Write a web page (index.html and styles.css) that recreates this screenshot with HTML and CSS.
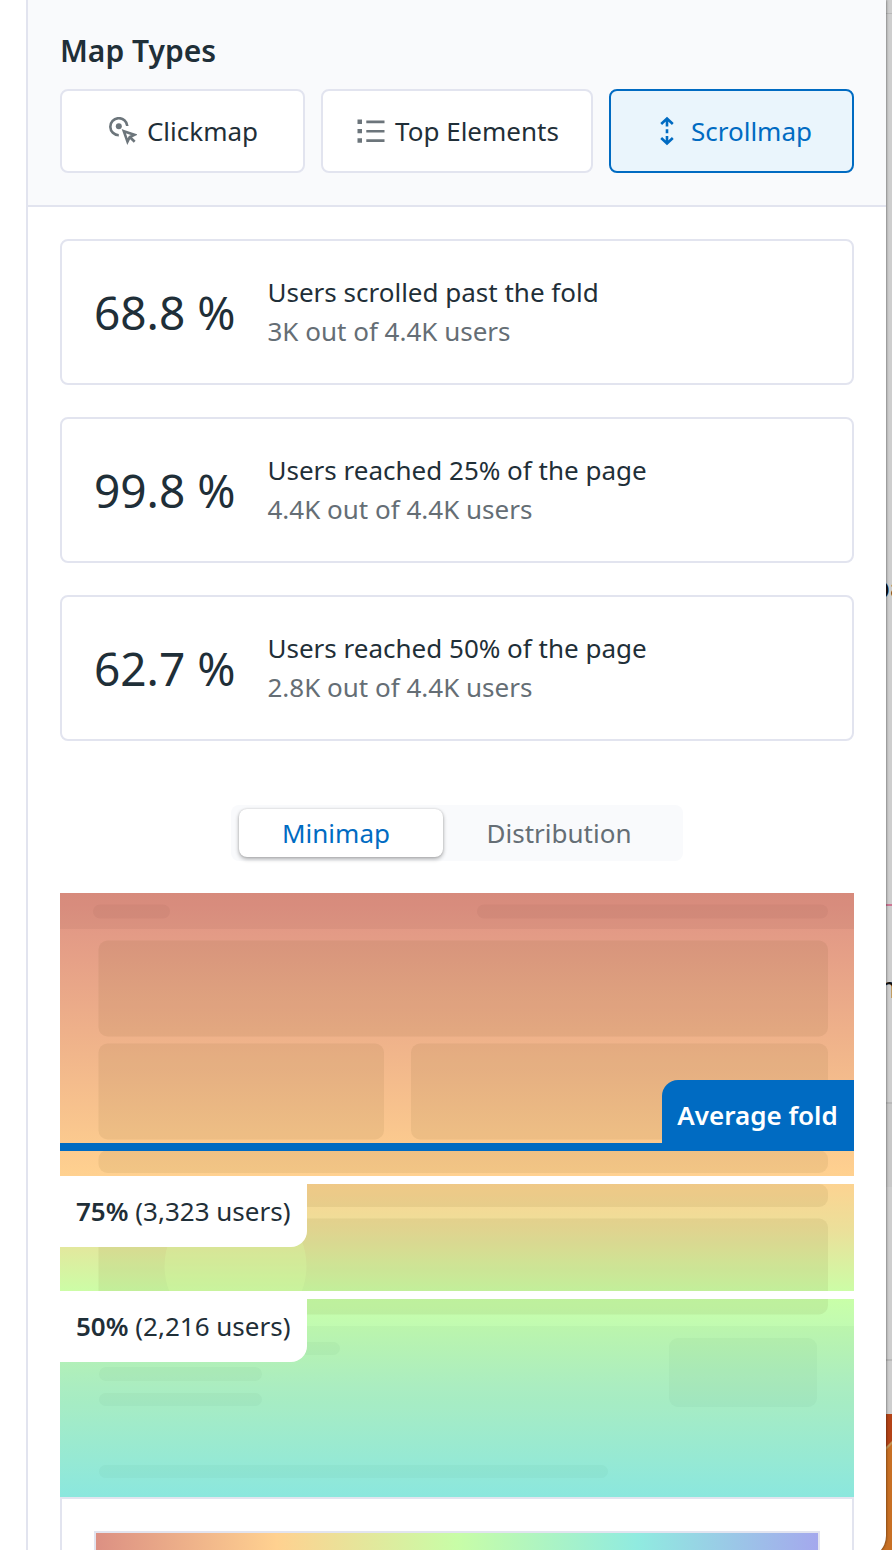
FILE: index.html
```html
<!DOCTYPE html>
<html lang="en">
<head>
<meta charset="utf-8">
<title>Heatmaps</title>
<link rel="stylesheet" href="styles.css">
</head>
<body>
<div class="app">
  <div class="panel">
    <header class="map-types">
      <h2 class="title">Map Types</h2>
      <div class="type-buttons">
        <button class="type-button">
          <svg class="icon" width="28" height="28" viewBox="0 0 28 28" fill="none" stroke="#6c757b" stroke-width="2.6"><path d="M9.800 18.200A8.500 8.500 0 1 1 18.300 9"/><circle cx="9.800" cy="9.300" r="3" fill="#6c757b" stroke="none"/><path d="M14.800 14.200l10.500 3.600-4.500 2.200-2.300 4.600z"/><path d="M20.500 19.800l5.200 5"/></svg>
          <span>Clickmap</span>
        </button>
        <button class="type-button">
          <svg class="icon" width="28" height="28" viewBox="0 0 28 28" fill="#6c757b"><path d="M.5 2.500h4.500v4.500H.5zM.5 12h4.500v4.200H.5zM.5 21.300h4.500v4.400H.5zM9.300 3.500h18.200v2.700H9.300zM9.300 13h18.200v2.500H9.300zM9.300 22.300h18.200V25H9.300z"/></svg>
          <span>Top Elements</span>
        </button>
        <button class="type-button active">
          <svg class="icon scroll-icon" width="28" height="30" viewBox="0 0 28 30" fill="none" stroke="#006bc2" stroke-width="2.6"><path d="M8.200 8L14 2.500 19.800 8M14 3v7.500M14 13.200v4M14 20v7M8.200 22l5.800 5.500 5.800-5.500"/></svg>
          <span>Scrollmap</span>
        </button>
      </div>
    </header>
    <main class="content">
      <section class="card"><strong class="value">68.8 %</strong><div class="detail"><p>Users scrolled past the fold</p><p class="muted">3K out of 4.4K users</p></div></section>
      <section class="card"><strong class="value">99.8 %</strong><div class="detail"><p>Users reached 25% of the page</p><p class="muted">4.4K out of 4.4K users</p></div></section>
      <section class="card"><strong class="value">62.7 %</strong><div class="detail"><p>Users reached 50% of the page</p><p class="muted">2.8K out of 4.4K users</p></div></section>
      <div class="tabs"><button class="tab selected">Minimap</button><button class="tab">Distribution</button></div>
      <div class="minimap">
        <svg class="wireframe" width="794" height="604" viewBox="0 0 794 604">
          <g fill="#402020" fill-opacity=".055">
            <path d="M-5-5h804v41H-5z"/>
            <rect x="33" y="11.500" width="77" height="14" rx="7" fill-opacity=".045"/>
            <rect x="417" y="11.500" width="351" height="14" rx="7" fill-opacity=".045"/>
          </g>
          <g fill="#403800" fill-opacity=".07">
            <rect x="38.500" y="47.500" width="729.500" height="96" rx="9"/>
            <rect x="38.500" y="150.500" width="285.500" height="96" rx="9"/>
            <rect x="351" y="150.500" width="417" height="96" rx="9"/>
            <rect x="38.500" y="257" width="729.500" height="23" rx="9"/>
            <rect x="38.500" y="291" width="729.500" height="23" rx="9"/>
            <rect x="38.500" y="325.500" width="729.500" height="96" rx="9"/>
          </g>
          <circle cx="175.500" cy="373" r="71" fill="#dcffa4" fill-opacity=".25"/>
          <g fill="#204830" fill-opacity=".035">
            <path d="M-5 433h804v176H-5z"/>
            <rect x="39" y="449" width="241" height="13" rx="6.500"/>
            <rect x="39" y="474" width="163" height="14" rx="7"/>
            <rect x="39" y="500" width="163" height="13" rx="6.500"/>
            <rect x="609" y="445" width="148" height="69" rx="9"/>
            <rect x="39" y="572" width="509" height="13" rx="6.500"/>
          </g>
        </svg>
        <div class="fold"><span class="fold-label">Average fold</span></div>
        <div class="marker marker-75"><span class="marker-label"><b>75%</b> (3,323 users)</span></div>
        <div class="marker marker-50"><span class="marker-label"><b>50%</b> (2,216 users)</span></div>
      </div>
      <div class="legend"><div class="scale"></div></div>
    </main>
  </div>
  <div class="page-edge">
    <svg width="20" height="1550" viewBox="0 0 20 1550">
      <path fill="#cecece" d="M0 0h20v1550H0z"/>
      <path fill="#c8c8c8" d="M0 1103h20v84H0z"/>
      <path fill="#cc7694" d="M0 904h20v2H0z"/>
      <path fill="#b9b9b9" d="M0 13h20v1H0zM0 1102h20v2H0zM0 1359h20v2H0z"/>
      <path fill="#b44316" d="M0 1414h20v136H0z"/>
      <path fill="#c87024" d="M14 1449l6-6v107H0v-98z"/>
      <path fill="#c39353" d="M14 1447l6-6v3l-6 6z"/>
    </svg>
    <span class="page-text first">pa</span>
    <span class="page-text second">n</span>
  </div>
</div>
</body>
</html>
```
FILE: styles.css
```css
* { box-sizing: border-box; }
body { margin: 0; background: #fff; color: #1f2f38; font-family: "Noto Sans", sans-serif; font-size: 26px; }
h2, p { margin: 0; }
button { font: inherit; color: inherit; border: 0; padding: 0; background: none; }
.app { position: relative; width: 892px; height: 1550px; overflow: hidden; }
.panel { position: relative; z-index: 1; width: 886px; height: 1558px; padding-left: 26px; background: #fff; border-bottom-right-radius: 22px; box-shadow: 0 0 3px rgba(0,0,0,.65); overflow: hidden; }
.map-types { height: 207px; padding: 30px 32px 0; background: #f9fafc; border-left: 2px solid #e2e4ef; border-bottom: 2px solid #e2e4ef; }
.title { height: 59px; font-size: 30px; line-height: 41px; font-weight: 600; }
.type-buttons { display: grid; grid-template-columns: 245px 272px 245px; gap: 16px; }
.type-button { display: flex; align-items: center; justify-content: center; gap: 10px; height: 84px; padding-left: 2px; background: #fff; border: 2px solid #e2e4ef; border-radius: 8px; }
.type-button.active { background: #eaf5fc; border-color: #006bc2; color: #006bc2; }
.icon { flex: none; }
.content { height: 1351px; border-left: 2px solid #e2e4ef; padding: 32px 32px 0; }
.card { display: flex; align-items: center; gap: 32px; height: 146px; margin-bottom: 32px; padding-left: 32px; border: 2px solid #e2e4ef; border-radius: 8px; }
.value { width: 141.500px; font-size: 46px; font-weight: 400; white-space: nowrap; }
.detail { line-height: 39px; white-space: nowrap; }
.muted { color: #656e75; }
.tabs { display: flex; width: 452px; height: 56px; margin: 64px auto 32px 171px; padding: 4px 8px; background: #f9fafc; border-radius: 8px; }
.tab { width: 204px; color: #656e75; }
.tab.selected { padding-right: 10px; background: #fff; color: #006bc2; border-radius: 8px; box-shadow: 0 2px 4px rgba(0,0,0,.32), 0 0 2px rgba(0,0,0,.16); }
.tab + .tab { width: 232px; }
.minimap { position: relative; width: 794px; height: 604px; background: linear-gradient(#e09082 0, #e39b86 42px, #ffd190 283px, #ebe09a 338px, #caffa7 402px, #b1f3c5 492px, #90ede4 604px); }
.wireframe { display: block; filter: blur(.7px); clip-path: inset(0); }
.fold { position: absolute; left: 0; right: 0; top: 250px; height: 8px; background: #006bc2; }
.fold-label { position: absolute; right: 0; bottom: 0; width: 192px; height: 71px; line-height: 71px; padding-right: 1px; text-align: center; border-top-left-radius: 16px; background: #006bc2; color: #fff; font-weight: 600; white-space: nowrap; }
.marker { position: absolute; left: 0; right: 0; height: 8px; background: #fff; }
.marker-75 { top: 283px; }
.marker-50 { top: 398px; }
.marker-label { position: absolute; top: 0; left: 0; width: 247px; height: 63px; line-height: 55px; padding-left: 16px; border-bottom-right-radius: 16px; background: #fff; white-space: nowrap; }
.marker-label b { font-weight: 600; }
.marker-label { height: 71px; line-height: 71px; }
.legend { height: 120px; padding: 32px; border: 2px solid #e2e4ef; }
.scale { height: 50px; border: 2px solid #e2e4ef; background: linear-gradient(90deg, #dc9083, #ffd190 25%, #c8fda7 50%, #90ebe0 75%, #a4a8ed); }
.page-edge { position: absolute; top: 0; left: 872px; width: 20px; height: 1550px; }
.page-text { position: absolute; color: #111; font-family: Roboto, sans-serif; font-size: 30px; line-height: 36px; }
.page-text.first { left: 1px; top: 570px; }
.page-text.second { left: 8px; top: 970px; }
```
